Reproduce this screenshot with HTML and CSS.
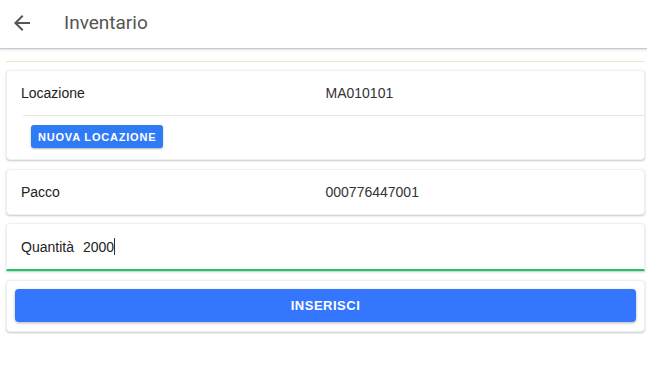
FILE: index.html
```html
<!DOCTYPE html>
<html lang="it">
<head>
    <meta charset="UTF-8">
    <meta name="viewport" content="width=device-width, initial-scale=1.0">
    <title>Inventario</title>
    <link rel="stylesheet" href="styles.css">
</head>
<body>
    <header class="toolbar">
        <button class="back" type="button" aria-label="Indietro">
            <svg width="24" height="24" viewBox="0 0 24 24">
                <path d="M20 11H7.83l5.59-5.59L12 4l-8 8 8 8 1.41-1.41L7.83 13H20v-2z" fill="#555"/>
            </svg>
        </button>
        <h1>Inventario</h1>
    </header>

    <div class="edge"></div>

    <div class="card">
        <div class="row">
            <span class="label">Locazione</span>
            <span class="value">MA010101</span>
        </div>
        <div class="actions">
            <button class="btn-small" type="button">Nuova locazione</button>
        </div>
    </div>

    <div class="card pack">
        <div class="row">
            <span class="label">Pacco</span>
            <span class="value">000776447001</span>
        </div>
    </div>

    <div class="card field">
        <label class="label" for="qty">Quantità</label>
        <span class="input" id="qty">2000<span class="caret"></span></span>
    </div>

    <div class="card submit">
        <button class="btn-wide" type="button">Inserisci</button>
    </div>
</body>
</html>
```

FILE: styles.css
```css
body {
    margin: 0;
    font-family: "Liberation Sans", Arial, sans-serif;
    font-size: 14px;
    color: #222;
    background: #fff;
}
.toolbar {
    height: 48px;
    display: flex;
    align-items: center;
    padding-left: 10px;
    border-bottom: 1px solid #c8c8c8;
    box-shadow: 0 1px 2px rgba(0,0,0,0.12);
}
.back {
    background: none;
    border: none;
    padding: 0;
    width: 24px;
    height: 24px;
    margin-top: -3px;
}
.toolbar h1 {
    margin: 0 0 4px 30px;
    font-family: Roboto, sans-serif;
    font-size: 19px;
    font-weight: 400;
    color: #555;
}
.edge {
    height: 1px;
    margin: 12px 2px 0 6px;
    background: #e4edc4;
}
.card {
    margin: 8px 2px 9px 6px;
    background: #fff;
    border-radius: 4px;
    border: 1px solid #f0f0f0;
    box-shadow: 0 1px 2px rgba(0,0,0,0.22);
}
.card + .card {
    margin-top: 0;
}
.card.pack {
    margin-bottom: 8px;
}
.row {
    display: grid;
    grid-template-columns: 1fr 1fr;
    height: 44px;
    align-items: center;
    padding: 0 14px;
}
.value {
    color: #333;
}
.actions {
    margin-left: 16px;
    border-top: 1px solid #e6e6e6;
    padding: 9px 0 11px 8px;
}
.btn-small {
    background: #2f7bf6;
    color: #fff;
    border: none;
    border-radius: 3px;
    height: 23px;
    padding: 0 7px;
    font-family: "Liberation Sans", Arial, sans-serif;
    font-size: 11px;
    font-weight: 700;
    letter-spacing: 0.8px;
    text-transform: uppercase;
    box-shadow: 0 1px 2px rgba(0,0,0,0.3);
}
.field {
    display: flex;
    align-items: center;
    height: 45px;
    padding: 0 14px;
    border-bottom: 2px solid #1fc46a;
    border-radius: 4px 4px 0 0;
    margin-bottom: 9px;
}
.field .label {
    margin-right: 9px;
}
.input {
    color: #222;
}
.caret {
    display: inline-block;
    width: 1px;
    height: 17px;
    background: #333;
    vertical-align: -3px;
}
.submit {
    padding: 8px 8px 9px 8px;
}
.btn-wide {
    display: block;
    width: 100%;
    height: 33px;
    background: #3576ff;
    color: #fff;
    border: none;
    border-radius: 4px;
    font-family: "Liberation Sans", Arial, sans-serif;
    font-size: 13px;
    font-weight: 700;
    letter-spacing: 0.5px;
    text-transform: uppercase;
    box-shadow: 0 1px 3px rgba(0,0,0,0.3);
}
```
